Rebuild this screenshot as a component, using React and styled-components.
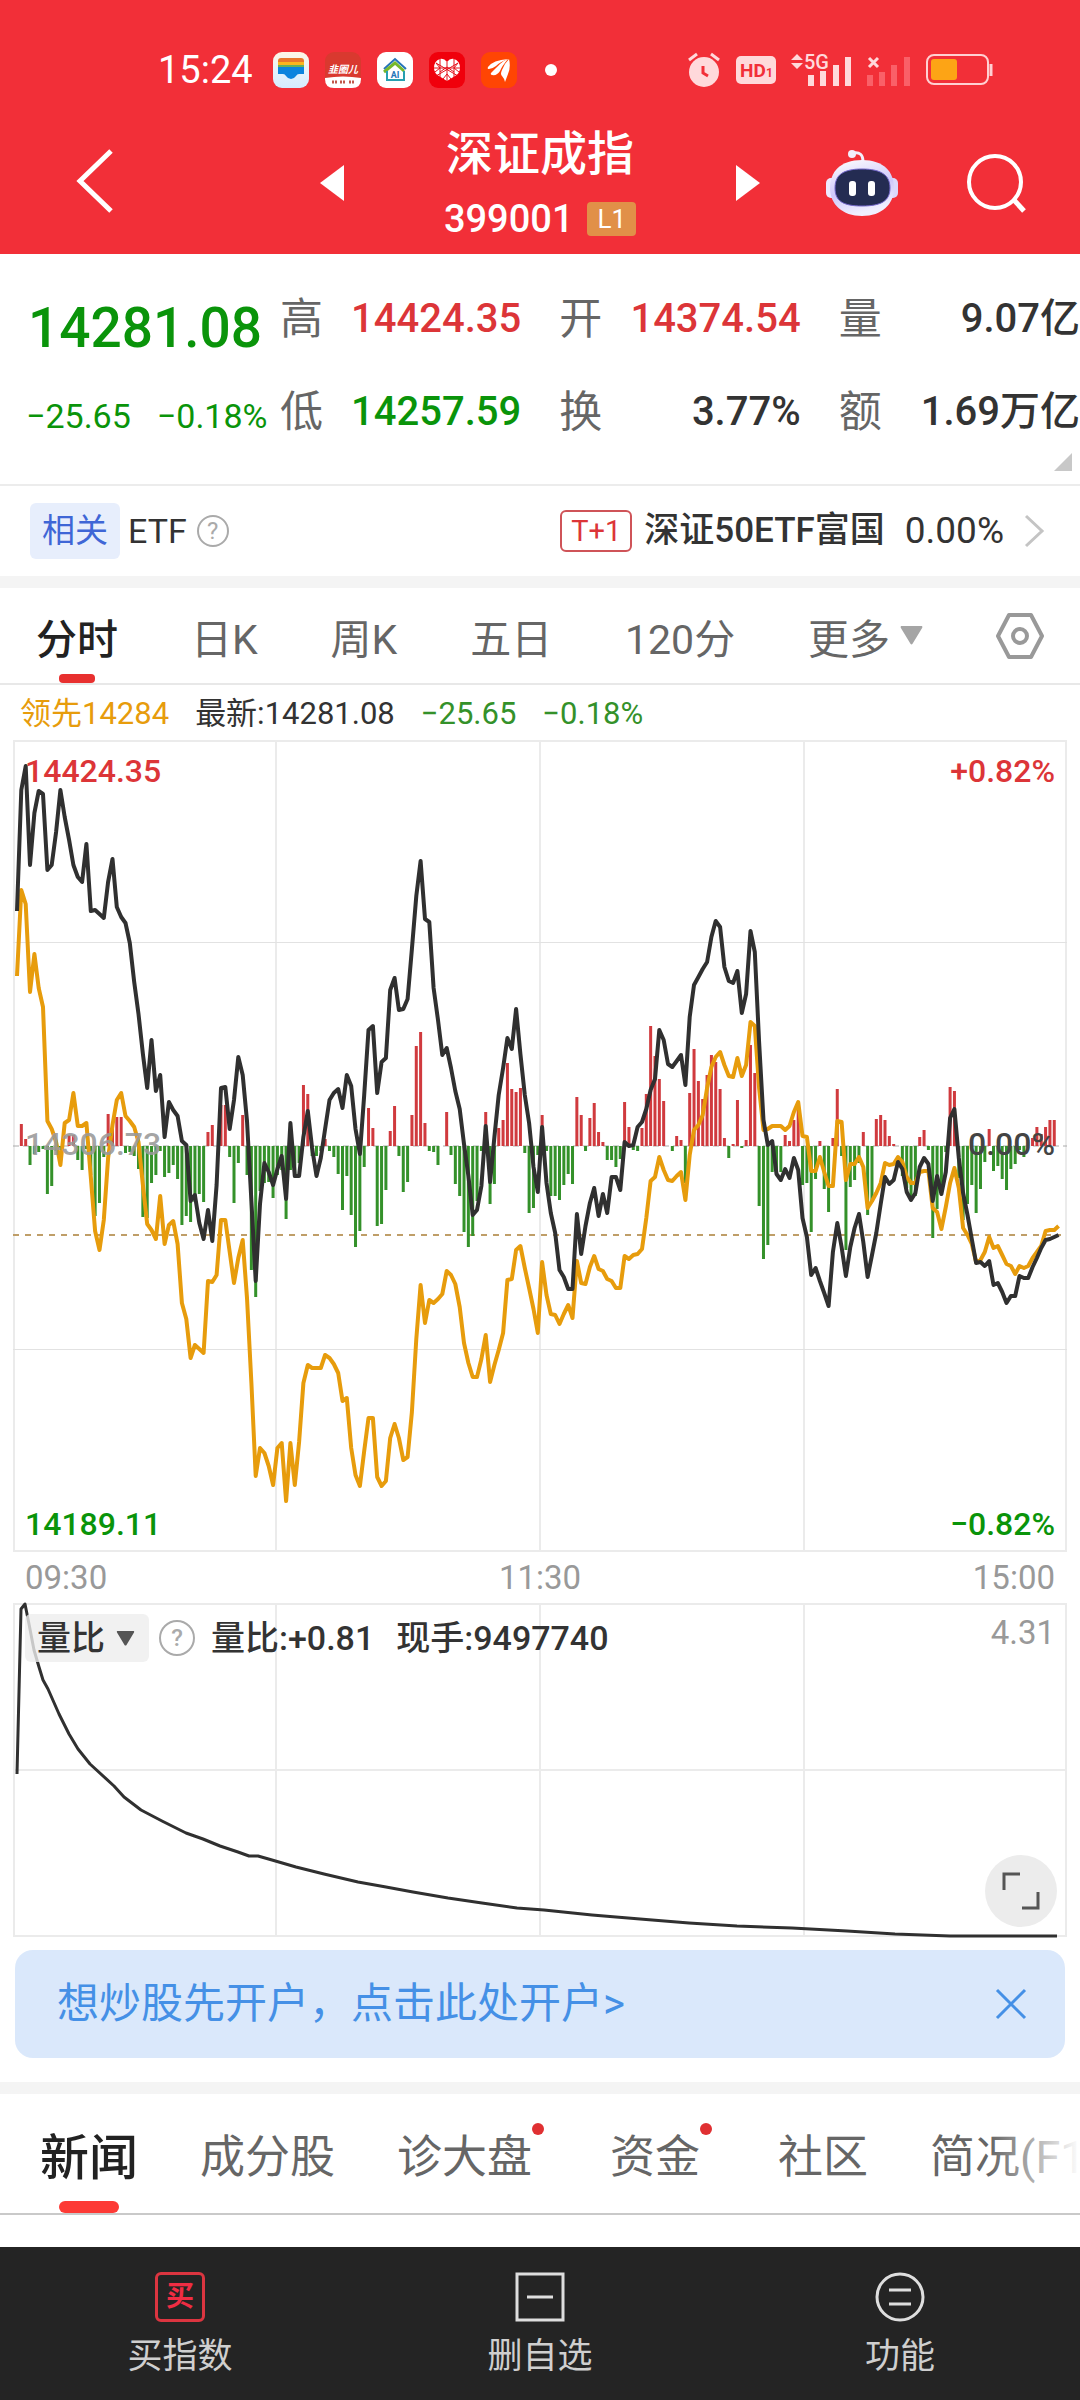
import React, { useState } from 'react';
import styled, { createGlobalStyle } from 'styled-components';

const GlobalStyle = createGlobalStyle`
  * {
    box-sizing: border-box;
  }
  body {
    margin: 0;
    background: #fff;
    color: #333;
    font-family: Roboto, "Noto Sans CJK SC", sans-serif;
  }
  button, select {
    margin: 0;
    padding: 0;
    border: none;
    background: none;
    color: inherit;
    font: inherit;
    cursor: pointer;
  }
  dl, dd, h1, p {
    margin: 0;
    font-weight: inherit;
  }
  svg {
    display: block;
    flex-shrink: 0;
    overflow: visible;
  }
`;

const RED = '#dc3538';
const GREEN = '#0a940a';

const Page = styled.div`
  display: flex;
  flex-direction: column;
  min-height: 100vh;
  overflow: hidden;
`;

const Header = styled.header`
  background: #f22f38;
  color: #fff;
  padding: 48px 0 6px;
`;

const StatusBar = styled.div`
  display: flex;
  justify-content: space-between;
  align-items: center;
  height: 44px;
  padding: 0 87px 0 158px;
`;

const StatusGroup = styled.div`
  display: flex;
  align-items: center;
  gap: ${(p) => p.$gap}px;
`;

const Clock = styled.time`
  font-size: 38px;
  line-height: 44px;
  margin-right: 4px;
`;

const Dot = styled.i`
  width: 12px;
  height: 12px;
  margin-left: 12px;
  border-radius: 50%;
  background: #fff;
`;

const TitleBar = styled.div`
  display: grid;
  grid-template-columns: 1fr 440px 1fr;
  align-items: center;
  padding: 26px 54px 0;
`;

const BackBox = styled.div`
  padding-left: 22px;
`;

const TitleNav = styled.div`
  display: flex;
  justify-content: space-between;
  align-items: center;
`;

const TitleText = styled.div`
  text-align: center;
`;

const Title = styled.h1`
  font-size: 47px;
  font-weight: 500;
  line-height: 72px;
`;

const Code = styled.p`
  display: flex;
  justify-content: center;
  align-items: center;
  gap: 14px;
  font-size: 38px;
  font-weight: 500;
  line-height: 58px;
`;

const Level = styled.span`
  padding: 0 10px;
  border-radius: 4px;
  background: #e19048;
  font-size: 26px;
  font-weight: 400;
  line-height: 34px;
`;

const Actions = styled.div`
  display: flex;
  justify-content: flex-end;
  align-items: center;
  gap: 68px;
`;

const Quote = styled.section`
  position: relative;
  display: flex;
  padding: 18px 0 26px 26px;
  border-bottom: 2px solid #ececec;
`;

const PriceBox = styled.div`
  width: 254px;
  flex-shrink: 0;
  color: ${GREEN};
`;

const Price = styled.p`
  padding-left: 2px;
  font-size: 55px;
  font-weight: 500;
  line-height: 112px;
`;

const Change = styled.p`
  display: flex;
  gap: 26px;
  font-size: 34px;
  line-height: 64px;
  white-space: nowrap;
`;

const Stats = styled.dl`
  flex: 1;
  display: grid;
  grid-template-columns: repeat(3, 1fr);
  column-gap: 38px;
`;

const Stat = styled.div`
  display: flex;
  justify-content: space-between;
  align-items: center;
  height: 93px;
  line-height: 60px;
  white-space: nowrap;

  dt {
    color: #666;
    font-size: 43px;
  }
  dd {
    color: ${(p) => p.$color || '#333'};
    font-size: 40px;
    font-weight: 500;
  }
`;

const Corner = styled.span`
  position: absolute;
  right: 8px;
  bottom: 13px;
  border-left: 18px solid transparent;
  border-bottom: 18px solid #c8c8c8;
`;

const Related = styled.section`
  display: flex;
  justify-content: space-between;
  align-items: center;
  height: 90px;
  padding: 0 36px 0 30px;
  font-size: 34px;
  line-height: 40px;
`;

const RelatedSide = styled.div`
  display: flex;
  align-items: center;
`;

const RelatedLink = styled.a`
  display: flex;
  align-items: center;
  color: #333;
  text-decoration: none;
`;

const BlueTag = styled.span`
  margin-right: 8px;
  padding: 0 12px;
  border-radius: 6px;
  background: #e7eefc;
  color: #3f66d6;
  font-size: 33px;
  line-height: 56px;
`;

const RedTag = styled.span`
  margin-right: 12px;
  padding: 0 9px;
  border: 2px solid #cf5358;
  border-radius: 6px;
  color: ${RED};
  font-size: 29px;
  line-height: 38px;
`;

const Fund = styled.span`
  margin-right: 20px;
  font-size: 35px;
  font-weight: 500;
`;

const FundRate = styled.span`
  margin-right: 20px;
  font-size: 37px;
`;

const Help = styled.button`
  width: ${(p) => p.$size}px;
  height: ${(p) => p.$size}px;
  margin-left: 10px;
  border: 2px solid #aaa;
  border-radius: 50%;
  color: #aaa;
  font-size: 24px;
  line-height: 1;
`;

const Band = styled.div`
  height: 12px;
  background: #f4f4f4;
`;

const PeriodTabs = styled.nav`
  display: flex;
  justify-content: space-between;
  height: 97px;
  padding: 0 36px;
  border-bottom: 2px solid #e8e8e8;
`;

const Period = styled.button`
  position: relative;
  display: flex;
  align-items: center;
  gap: 10px;
  color: ${(p) => (p.$active ? '#222' : '#666')};
  font-size: 41px;
  font-weight: ${(p) => (p.$active ? 500 : 400)};

  &::after {
    content: "";
    display: ${(p) => (p.$active ? 'block' : 'none')};
    position: absolute;
    left: calc(50% - 18px);
    bottom: 0;
    width: 36px;
    height: 9px;
    border-radius: 4px;
    background: #e8302f;
  }
`;

const Legend = styled.div`
  display: flex;
  gap: 26px;
  padding: 3px 20px 0;
  font-size: 31px;
  line-height: 52px;
`;

const Tint = styled.span`
  color: ${(p) => p.$color};
`;

const ChartBox = styled.div`
  position: relative;
  margin: 0 13px;

  > svg {
    width: 100%;
    height: auto;
  }
  text {
    font-size: 32px;
    font-weight: 500;
  }
`;

const Times = styled.div`
  display: flex;
  justify-content: space-between;
  padding: 0 25px;
  color: #999;
  font-size: 33px;
  line-height: 51px;
`;

const VolumeBar = styled.div`
  position: absolute;
  top: 11px;
  left: 12px;
  right: 12px;
  display: flex;
  align-items: center;
  font-size: 34px;
  line-height: 48px;
  font-weight: 500;
`;

const MetricPicker = styled.label`
  display: flex;
  align-items: center;
  gap: 10px;
  padding: 0 14px 0 12px;
  border-radius: 6px;
  background: rgba(238, 238, 238, 0.8);

  select {
    width: 69px;
    height: 48px;
    appearance: none;
  }
`;

const VolumeText = styled.span`
  margin-left: ${(p) => p.$gap}px;
`;

const VolumeMax = styled.span`
  align-self: flex-start;
  margin-left: auto;
  color: #999;
  font-size: 33px;
  font-weight: 400;
  line-height: 38px;
`;

const Expand = styled.button`
  position: absolute;
  right: 10px;
  bottom: 10px;
  display: grid;
  place-items: center;
  width: 72px;
  height: 72px;
  border-radius: 50%;
  background: #ececec;
`;

const Banner = styled.aside`
  display: flex;
  justify-content: space-between;
  align-items: center;
  height: 108px;
  margin: 13px 15px 24px;
  padding: 0 38px 0 42px;
  border-radius: 18px;
  background: #dae8fb;
  color: #4590e6;
  font-size: 42px;
  line-height: 60px;

  a {
    color: inherit;
    text-decoration: none;
  }
`;

const NewsTabs = styled.nav`
  position: relative;
  display: flex;
  gap: 62px;
  height: 121px;
  padding-left: 40px;
  border-bottom: 2px solid #c9c9c9;
  overflow: hidden;

  &::after {
    content: "";
    position: absolute;
    top: 0;
    right: 0;
    width: 90px;
    height: 100%;
    background: linear-gradient(to right, rgba(255, 255, 255, 0), #fff);
    pointer-events: none;
  }
`;

const NewsTab = styled.button`
  position: relative;
  flex-shrink: 0;
  padding-right: ${(p) => (p.$badge ? 16 : 0)}px;
  color: ${(p) => (p.$active ? '#222' : '#666')};
  font-size: ${(p) => (p.$active ? 49 : 45)}px;
  font-weight: ${(p) => (p.$active ? 500 : 400)};
`;

const Underline = styled.span`
  position: absolute;
  left: calc(50% - 30px);
  bottom: 0;
  width: 60px;
  height: 12px;
  border-radius: 6px;
  background: #fd3a35;
`;

const Badge = styled.span`
  position: absolute;
  top: 29px;
  right: 4px;
  width: 12px;
  height: 12px;
  border-radius: 50%;
  background: #e03032;
`;

const News = styled.main`
  flex: 1;
  min-height: 30px;
`;

const BottomBar = styled.nav`
  display: grid;
  grid-template-columns: repeat(3, 1fr);
  padding: 25px 0 15px;
  background: #242424;
`;

const BottomItem = styled.button`
  display: flex;
  flex-direction: column;
  align-items: center;
  gap: 6px;
  color: #cfcfcf;
  font-size: 35px;
  line-height: 57px;
`;

const BuyMark = styled.span`
  width: 50px;
  height: 50px;
  border: 3px solid #dc3540;
  border-radius: 6px;
  color: #f02d43;
  font-size: 28px;
  font-weight: 700;
  line-height: 44px;
`;

// one value per minute, top of the chart is 0
const priceLine = [
  171, 50, 26, 125, 73, 51, 54, 130, 125, 92, 50, 77, 100, 125, 137, 142, 104, 171, 170, 174,
  178, 142, 119, 167, 177, 183, 203, 242, 274, 314, 348, 300, 351, 335, 397, 362, 370, 376, 401, 405,
  461, 455, 483, 499, 470, 501, 445, 348, 347, 389, 360, 317, 335, 381, 461, 541, 464, 423, 432, 445,
  429, 416, 459, 383, 436, 436, 397, 371, 408, 436, 418, 389, 360, 353, 349, 368, 335, 346, 389, 414,
  355, 290, 286, 353, 322, 318, 250, 238, 270, 269, 259, 209, 156, 121, 179, 182, 248, 280, 315, 308,
  328, 351, 369, 404, 436, 475, 470, 446, 386, 442, 397, 355, 328, 298, 309, 269, 314, 355, 383, 427,
  452, 387, 443, 473, 493, 530, 537, 549, 549, 474, 514, 486, 463, 448, 476, 454, 473, 437, 437, 450,
  402, 406, 405, 387, 382, 369, 350, 339, 290, 300, 324, 327, 321, 315, 345, 277, 245, 237, 229, 222,
  197, 181, 187, 227, 241, 243, 231, 273, 254, 191, 212, 302, 380, 405, 401, 434, 440, 429, 438, 418,
  430, 478, 497, 535, 528, 541, 553, 566, 512, 483, 507, 536, 507, 488, 474, 502, 537, 515, 493, 464,
  437, 444, 440, 422, 429, 452, 460, 453, 427, 418, 424, 461, 436, 454, 432, 378, 369, 418, 453, 475,
  499, 523, 522, 526, 521, 545, 543, 552, 563, 556, 556, 536, 538, 538, 527, 518, 508, 500, 499, 497,
  495,
];

const leadLine = [
  236, 150, 164, 252, 214, 248, 267, 381, 389, 402, 425, 383, 380, 353, 386, 386, 383, 437, 491, 510,
  480, 418, 385, 360, 353, 376, 381, 387, 402, 445, 484, 490, 499, 456, 504, 485, 481, 504, 563, 579,
  618, 605, 609, 613, 541, 542, 535, 480, 480, 512, 543, 518, 500, 558, 643, 736, 708, 713, 726, 745,
  708, 703, 761, 703, 745, 702, 643, 625, 628, 628, 628, 615, 618, 624, 633, 661, 658, 708, 735, 746,
  711, 678, 678, 737, 746, 741, 698, 684, 698, 720, 717, 672, 599, 545, 583, 560, 563, 559, 554, 531,
  535, 544, 567, 603, 623, 637, 637, 619, 595, 642, 625, 610, 593, 540, 539, 510, 506, 528, 548, 569,
  593, 522, 555, 574, 575, 584, 574, 565, 578, 521, 543, 544, 527, 516, 529, 531, 539, 541, 548, 548,
  516, 519, 515, 514, 509, 478, 441, 437, 417, 430, 440, 441, 436, 432, 460, 415, 390, 385, 375, 348,
  327, 317, 312, 325, 336, 337, 318, 336, 325, 282, 286, 348, 390, 389, 386, 386, 386, 390, 386, 372,
  362, 396, 397, 431, 431, 417, 432, 446, 446, 381, 382, 440, 424, 424, 417, 427, 468, 461, 453, 443,
  423, 425, 424, 417, 422, 437, 443, 443, 432, 431, 431, 468, 472, 489, 467, 443, 428, 448, 488, 495,
  504, 522, 520, 512, 497, 508, 506, 515, 524, 526, 534, 526, 528, 526, 518, 512, 506, 491, 490, 490,
  486,
];

// buying (positive) and selling (negative) strength per minute
const strength = [
  0, 22, 7, -19, -8, -6, -3, -48, -40, -5, -2, 0, 11, 11, -14, -24, -3, -29, -70, -57,
  -11, 32, 17, 29, 29, -7, -6, -10, -23, -71, -72, -37, -29, -5, -31, -27, -19, -33, -79, -70,
  -76, -56, -48, -56, 14, 21, 0, 41, 41, -11, -57, -17, 31, -29, -124, -151, -45, -37, -36, -52,
  -29, -24, -73, -24, -29, -17, 61, 52, -10, -10, -5, 7, -5, -11, -28, -64, -30, -69, -101, -85,
  -21, 38, 18, -80, -78, -44, 15, 40, -10, -46, -36, 31, 100, 114, 23, -5, -6, -19, 0, 34,
  -9, -38, -50, -86, -101, -90, -55, -5, 34, -58, -38, 18, 26, 83, 57, 54, 58, -7, -67, -62,
  -9, 31, -5, -50, -50, -54, -39, -28, -38, 49, 31, -5, 28, 43, 14, 4, -14, -14, -21, -13,
  44, 19, -4, -5, 18, 52, 120, 90, 67, 45, 0, -5, 10, 6, -37, 53, 97, 65, 47, 71,
  91, 84, 57, 8, -12, 2, 46, -2, 6, 101, 73, -60, -113, -99, -26, -24, -26, 11, 5, 26,
  43, -39, -37, -86, -33, 5, -43, -66, 8, 57, -10, -104, -41, -34, -17, 14, -69, -56, 27, 31,
  26, 10, 2, 0, -30, -42, -50, -50, 9, 16, -4, -92, -63, -49, -6, 59, 55, -32, -74, -58,
  -39, -67, -43, -16, 17, -25, -20, -33, -44, -23, -18, -4, -11, 0, 8, 19, 12, 19, 26, 26,
  0,
];

const volumeRatio = [
  [4, 171], [8, 6], [12, 1], [16, 21], [21, 47], [26, 64], [30, 77], [35, 86], [46, 111], [56, 131],
  [65, 146], [77, 161], [101, 183], [111, 194], [128, 207], [149, 218], [173, 230], [190, 236],
  [207, 243], [225, 249], [236, 253], [245, 253], [259, 257], [283, 264], [311, 271], [345, 279],
  [373, 284], [400, 289], [435, 295], [469, 300], [504, 305], [531, 307], [579, 312], [627, 316],
  [676, 320], [724, 323], [779, 325], [834, 328], [882, 331], [937, 333], [1044, 333],
];

const MID = 406;
const minuteX = (i) => 4 + i * 4.34;
const toPoints = (line) => line.map((y, i) => `${minuteX(i).toFixed(1)},${y}`).join(' ');

const stats = [
  { label: '高', value: '14424.35', color: RED },
  { label: '开', value: '14374.54', color: RED },
  { label: '量', value: '9.07亿' },
  { label: '低', value: '14257.59', color: GREEN },
  { label: '换', value: '3.77%' },
  { label: '额', value: '1.69万亿' },
];

const periods = ['分时', '日K', '周K', '五日', '120分'];

const newsTabs = [
  { name: '新闻' },
  { name: '成分股' },
  { name: '诊大盘', badge: true },
  { name: '资金', badge: true },
  { name: '社区' },
  { name: '简况(F10)' },
];

const AppIcons = () => (
  <>
    <svg width="36" height="36" viewBox="0 0 36 36">
      <defs>
        <linearGradient id="wallet" x1="0" y1="0" x2="0" y2="1">
          <stop offset="0" stopColor="#fff5e4" />
          <stop offset="0.5" stopColor="#e6f2fc" />
          <stop offset="1" stopColor="#d5ebff" />
        </linearGradient>
      </defs>
      <rect width="36" height="36" rx="9" fill="url(#wallet)" />
      <path d="M5 14V9q0-3 3-3h20q3 0 3 3v5z" fill="#e9762c" />
      <path d="M5 10h26v6H5z" fill="#fbb51f" />
      <path d="M5 13h26v4H5z" fill="#67b05a" />
      <path d="M5 15h26v7h-5q-2 0-3 2-2 3-5 3t-5-3q-1-2-3-2H5z" fill="#0c83de" />
    </svg>
    <svg width="36" height="36" viewBox="0 0 36 36">
      <rect width="36" height="36" rx="9" fill="#d9392f" />
      <path d="M0 26q18-3 36 0v1q0 9-9 9H9q-9 0-9-9z" fill="#fff" />
      <text x="18" y="21" textAnchor="middle" fontSize="10" fontWeight="700" fontStyle="italic" fill="#fff">韭圈儿</text>
      <path d="M7 30h5M15 30h6M24 30h6" stroke="#c2564a" strokeWidth="3" strokeDasharray="2 1" />
    </svg>
    <svg width="36" height="36" viewBox="0 0 36 36">
      <rect width="36" height="36" rx="9" fill="#fff" />
      <path d="M7 17L18 7l11 10" fill="none" stroke="#2674b8" strokeWidth="2" />
      <path d="M7 20l11-9 9 8" fill="none" stroke="#76b82a" strokeWidth="3" />
      <path d="M10 19v9h17v-9" fill="none" stroke="#279fb0" strokeWidth="2" />
      <text x="18" y="26" textAnchor="middle" fontSize="9" fontWeight="700" fill="#2674b8">AI</text>
    </svg>
    <svg width="36" height="36" viewBox="0 0 36 36">
      <rect width="36" height="36" rx="9" fill="#f0000c" />
      <path d="M18 10q3-4 7-3 6 2 6 9 0 5-5 8l-8 5-8-5q-5-3-5-8 0-7 6-9 4-1 7 3z" fill="#fff" />
      <path
        d="M18 10v19M11 7v18M25 7v18M5 16h26M7 11l22 13M29 11L7 24M11 20l7-5 7 5M7 11l4 5-5 4M29 11l-4 5 5 4M14 27l4-5 4 5"
        stroke="#e5101a"
        strokeWidth="1"
        fill="none"
      />
    </svg>
    <svg width="36" height="36" viewBox="0 0 36 36">
      <rect width="36" height="36" rx="9" fill="#ff4503" />
      <path d="M7 15q5-7 20-8-8 3-12 7-4 3-7 3-2 0-1-2z" fill="#fff" />
      <path d="M11 23q-3-1 1-4 4-4 7-7 4-4 8-5-6 7-8 12-3 5-8 4z" fill="#fff" />
      <path d="M21 24q-2-2 0-6 2-6 7-11 2 8-1 15l-3 8q-1-4-3-6z" fill="#fff" />
    </svg>
  </>
);

const StatusIcons = () => (
  <>
    <svg width="34" height="36" viewBox="0 0 34 36" fill="#ffd9db">
      <circle cx="17" cy="20" r="15" />
      <path d="M2 8l8-6M32 8l-8-6" stroke="#ffd9db" strokeWidth="3" />
      <path d="M16 14v7l5 3" fill="none" stroke="#f22f38" strokeWidth="3" />
    </svg>
    <svg width="40" height="28" viewBox="0 0 40 28">
      <rect width="40" height="28" rx="5" fill="#ffd9db" />
      <text x="4" y="21" fontSize="19" fontWeight="700" fill="#f22f38">HD</text>
      <text x="30" y="21" fontSize="12" fontWeight="700" fill="#f22f38">1</text>
    </svg>
    <svg width="61" height="34" viewBox="0 0 61 34" fill="#ffd9db">
      <path d="M0 7l6-6 6 6zM0 10h12l-6 6z" />
      <text x="13" y="16" fontSize="20" fontWeight="500">5G</text>
      <path d="M17 22h6v11h-6zM29 18h6v15h-6zM42 12h6v21h-6zM54 4h6v29h-6z" />
    </svg>
    <svg width="44" height="34" viewBox="0 0 44 34">
      <path d="M0 22h6v11H0zM12 19h6v14h-6zM24 12h6v21h-6zM37 4h6v29h-6z" fill="#fa6068" />
      <path d="M2 5l9 9M11 5l-9 9" stroke="#ffd9db" strokeWidth="3" />
    </svg>
    <svg width="67" height="32" viewBox="0 0 67 32">
      <rect x="1" y="1" width="61" height="29" rx="7" fill="none" stroke="#ffd0d2" strokeWidth="2" />
      <rect x="5" y="5" width="26" height="21" rx="3" fill="#fda415" />
      <path d="M65 10v12" stroke="#ffd0d2" strokeWidth="3" />
    </svg>
  </>
);

const Robot = () => (
  <svg width="72" height="68" viewBox="0 0 72 68">
    <defs>
      <linearGradient id="shell" x1="0" y1="0" x2="0.3" y2="1">
        <stop offset="0" stopColor="#ffffff" />
        <stop offset="0.6" stopColor="#cfc8fa" />
        <stop offset="1" stopColor="#f0efff" />
      </linearGradient>
    </defs>
    <path d="M27 4q10-2 10 9" fill="none" stroke="#f3eefc" strokeWidth="3" />
    <circle cx="26" cy="5" r="4" fill="#f3eefc" />
    <rect x="0" y="29" width="12" height="20" rx="5" fill="#eeeaff" />
    <rect x="60" y="29" width="12" height="20" rx="5" fill="#dcd8fc" />
    <path d="M36 11c22 0 32 12 32 28S56 67 36 67 4 55 4 39s10-28 32-28z" fill="url(#shell)" />
    <path d="M36 20c19 0 28 6 28 19s-9 18-28 18S9 52 9 39s8-19 27-19z" fill="#242c52" stroke="#7165c9" strokeWidth="1" />
    <rect x="23" y="32" width="7" height="15" rx="3" fill="#fff" />
    <rect x="42" y="32" width="7" height="15" rx="3" fill="#fff" />
  </svg>
);

const DownArrow = ({ size, color }) => (
  <svg width={size} height={size - 4} viewBox="0 0 22 18">
    <path d="M1 0h20q1 1 0 2l-9 15q-1 1-2 0L1 2Q0 1 1 0z" fill={color} />
  </svg>
);

const PriceChart = () => (
  <ChartBox>
    <svg viewBox="0 0 1054 812" role="img" aria-label="分时走势">
      <g fill="none" stroke="#ebebeb" strokeWidth="2">
        <rect x="1" y="1" width="1052" height="810" />
        <path d="M263 0v812M527 0v812M791 0v812" />
        <path d="M0 202.5h1054M0 609.5h1054" stroke="#e2e2e2" strokeWidth="1" />
      </g>
      <path d={`M0 ${MID}h1054`} stroke="#aaa" strokeWidth="1" strokeDasharray="6 4" />
      <path d="M0 495h1048" stroke="#bf9e68" strokeWidth="2" strokeDasharray="6 6" />
      {strength.map((v, i) => (
        <rect
          key={i}
          x={minuteX(i) - 1.5}
          y={v > 0 ? MID - v : MID}
          width="3"
          height={Math.abs(v)}
          fill={v > 0 ? '#d03a3e' : '#34912a'}
        />
      ))}
      <g fill="none" strokeWidth="4" strokeLinejoin="round">
        <polyline points={toPoints(leadLine)} stroke="#e79c0c" />
        <polyline points={toPoints(priceLine)} stroke="#303030" />
      </g>
      <text x="12" y="42" fill={RED}>14424.35</text>
      <text x="1042" y="42" fill={RED} textAnchor="end">+0.82%</text>
      <text x="12" y="415" fill="#999" fillOpacity="0.9">14306.73</text>
      <text x="1042" y="415" fill="#444" textAnchor="end">0.00%</text>
      <text x="12" y="795" fill={GREEN}>14189.11</text>
      <text x="1042" y="795" fill={GREEN} textAnchor="end">−0.82%</text>
    </svg>
  </ChartBox>
);

const VolumeChart = () => (
  <ChartBox>
    <svg viewBox="0 0 1054 334" role="img" aria-label="量比">
      <g fill="none" stroke="#ebebeb" strokeWidth="2">
        <rect x="1" y="1" width="1052" height="332" />
        <path d="M263 0v334M527 0v334M791 0v334M0 167h1054" />
      </g>
      <polyline points={volumeRatio.join(' ')} fill="none" stroke="#303030" strokeWidth="3" strokeLinejoin="round" />
    </svg>
    <VolumeBar>
      <MetricPicker>
        <select aria-label="指标" defaultValue="量比">
          <option>量比</option>
          <option>成交量</option>
        </select>
        <DownArrow size={19} color="#555" />
      </MetricPicker>
      <Help $size={36} aria-label="量比说明">?</Help>
      <VolumeText $gap={16}>量比:+0.81</VolumeText>
      <VolumeText $gap={22}>现手:9497740</VolumeText>
      <VolumeMax>4.31</VolumeMax>
    </VolumeBar>
    <Expand aria-label="全屏">
      <svg width="38" height="38" viewBox="0 0 38 38" fill="none" stroke="#555" strokeWidth="3">
        <path d="M2 18V2h16M36 20v16H20" />
      </svg>
    </Expand>
  </ChartBox>
);

const App = () => {
  const [period, setPeriod] = useState('分时');
  const [tab, setTab] = useState('新闻');
  const [showBanner, setShowBanner] = useState(true);

  return (
    <Page>
      <GlobalStyle />
      <Header>
        <StatusBar>
          <StatusGroup $gap={16}>
            <Clock>15:24</Clock>
            <AppIcons />
            <Dot />
          </StatusGroup>
          <StatusGroup $gap={15}>
            <StatusIcons />
          </StatusGroup>
        </StatusBar>
        <TitleBar>
          <BackBox>
            <button aria-label="返回">
              <svg width="38" height="64" viewBox="0 0 38 64" fill="none" stroke="#fff" strokeWidth="5">
                <path d="M35 2L4 32l31 30" />
              </svg>
            </button>
          </BackBox>
          <TitleNav>
            <button aria-label="上一个">
              <svg width="24" height="36" viewBox="0 0 24 36"><path d="M24 0v36L0 18z" fill="#fff" /></svg>
            </button>
            <TitleText>
              <Title>深证成指</Title>
              <Code>399001<Level>L1</Level></Code>
            </TitleText>
            <button aria-label="下一个">
              <svg width="24" height="36" viewBox="0 0 24 36"><path d="M0 0v36l24-18z" fill="#fff" /></svg>
            </button>
          </TitleNav>
          <Actions>
            <button aria-label="智能助手"><Robot /></button>
            <button aria-label="搜索">
              <svg width="60" height="60" viewBox="0 0 60 60" fill="none" stroke="#fff" strokeWidth="4">
                <circle cx="29" cy="29" r="26" />
                <path d="M48 47l10 11" strokeWidth="5" />
              </svg>
            </button>
          </Actions>
        </TitleBar>
      </Header>

      <Quote>
        <PriceBox>
          <Price>14281.08</Price>
          <Change><span>−25.65</span><span>−0.18%</span></Change>
        </PriceBox>
        <Stats>
          {stats.map((s) => (
            <Stat key={s.label} $color={s.color}>
              <dt>{s.label}</dt>
              <dd>{s.value}</dd>
            </Stat>
          ))}
        </Stats>
        <Corner />
      </Quote>

      <Related>
        <RelatedSide>
          <BlueTag>相关</BlueTag>
          ETF
          <Help $size={32} aria-label="ETF说明">?</Help>
        </RelatedSide>
        <RelatedLink href="#etf">
          <RedTag>T+1</RedTag>
          <Fund>深证50ETF富国</Fund>
          <FundRate>0.00%</FundRate>
          <svg width="20" height="32" viewBox="0 0 20 32" fill="none" stroke="#c4c4c4" strokeWidth="3">
            <path d="M2 1l16 15L2 31" />
          </svg>
        </RelatedLink>
      </Related>
      <Band />

      <PeriodTabs>
        {periods.map((name) => (
          <Period key={name} $active={name === period} onClick={() => setPeriod(name)}>
            {name}
          </Period>
        ))}
        <Period>
          更多
          <DownArrow size={23} color="#a5a5a5" />
        </Period>
        <Period aria-label="设置">
          <svg width="48" height="46" viewBox="0 0 48 46" fill="none" stroke="#999" strokeWidth="4" strokeLinejoin="round">
            <path d="M13 2h22l11 21-11 21H13L2 23z" />
            <circle cx="24" cy="23" r="7" />
          </svg>
        </Period>
      </PeriodTabs>

      <Legend>
        <Tint $color="#e79c0c">领先14284</Tint>
        <span>最新:14281.08</span>
        <Tint $color="#34912a">−25.65</Tint>
        <Tint $color="#34912a">−0.18%</Tint>
      </Legend>
      <PriceChart />
      <Times>
        <span>09:30</span>
        <span>11:30</span>
        <span>15:00</span>
      </Times>
      <VolumeChart />

      {showBanner && (
        <Banner>
          <a href="#open">想炒股先开户，点击此处开户&gt;</a>
          <button aria-label="关闭" onClick={() => setShowBanner(false)}>
            <svg width="32" height="32" viewBox="0 0 32 32" stroke="#4590e6" strokeWidth="3">
              <path d="M2 2l28 28M30 2L2 30" />
            </svg>
          </button>
        </Banner>
      )}
      <Band />

      <NewsTabs>
        {newsTabs.map((t) => (
          <NewsTab key={t.name} $active={t.name === tab} $badge={t.badge} onClick={() => setTab(t.name)}>
            {t.name}
            {t.badge && <Badge />}
            {t.name === tab && <Underline />}
          </NewsTab>
        ))}
      </NewsTabs>
      <News />

      <BottomBar>
        <BottomItem>
          <BuyMark aria-hidden="true">买</BuyMark>
          买指数
        </BottomItem>
        <BottomItem>
          <svg width="50" height="50" viewBox="0 0 50 50" fill="none" stroke="#dedede" strokeWidth="3">
            <path d="M2 2h46v46H2zM12 25h26" />
          </svg>
          删自选
        </BottomItem>
        <BottomItem>
          <svg width="50" height="50" viewBox="0 0 50 50" fill="none" stroke="#dedede" strokeWidth="3">
            <circle cx="25" cy="25" r="23" />
            <path d="M14 18h22M14 32h22" />
          </svg>
          功能
        </BottomItem>
      </BottomBar>
    </Page>
  );
};

export default App;
